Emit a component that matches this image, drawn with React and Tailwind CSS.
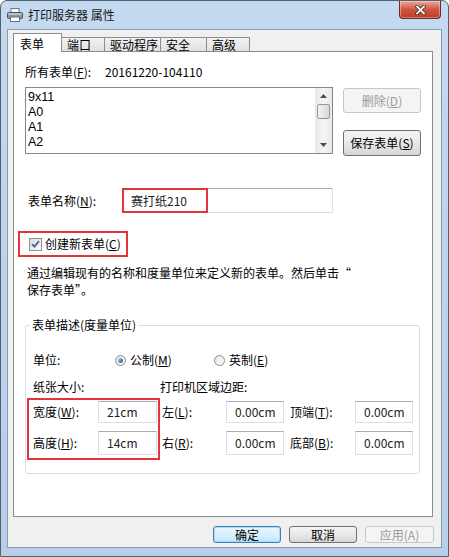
import React from 'react'

const font = { fontFamily: '"Noto Sans CJK SC", "Noto Sans", sans-serif' }

const PrinterIcon = () => (
  <svg width="16" height="14" viewBox="0 0 16 14" className="shrink-0">
    <rect x="4" y="0.5" width="8" height="4" fill="#fff" stroke="#6b7480" />
    <rect x="0.5" y="4.5" width="15" height="6" rx="1" fill="#8d96a2" stroke="#4d5560" />
    <rect x="1.5" y="5" width="13" height="2" fill="#b8c0ca" />
    <rect x="3.5" y="9" width="9" height="4.5" fill="#fff" stroke="#6b7480" />
    <circle cx="13" cy="7" r="0.8" fill="#6fdc6f" />
  </svg>
)

const Btn = ({ children, disabled, primary, className = '' }) => (
  <div
    className={
      'flex items-center justify-center rounded-[3px] border text-[12px] ' +
      (disabled
        ? 'border-[#c4c8cc] bg-[#f4f4f4] text-[#9a9a9a] '
        : primary
        ? 'border-[#3c7fb1] bg-gradient-to-b from-[#eaf6fd] via-[#d9f0fc] to-[#bee6fd] text-black shadow-[inset_0_0_0_1px_#a9dcf7] '
        : 'border-[#707070] bg-gradient-to-b from-[#f4f4f4] via-[#e9e9e9] to-[#d6d6d6] text-black ') +
      className
    }
  >
    {children}
  </div>
)

const Field = ({ value, className = '' }) => (
  <div
    className={
      'flex items-center border border-[#dbdfe6] border-t-[#abadb3] bg-white pl-[8px] text-[12px] text-[#222] ' +
      className
    }
  >
    {value}
  </div>
)

const U = ({ children }) => <span className="underline">{children}</span>

const Radio = ({ checked }) => (
  <span className="flex h-[11px] w-[11px] items-center justify-center rounded-full border border-[#8e8f8f] bg-gradient-to-br from-[#e4e4e4] to-[#fdfdfd]">
    {checked && <span className="h-[5px] w-[5px] rounded-full bg-gradient-to-br from-[#9fd2f2] to-[#1b5f9e]" />}
  </span>
)

export default function App() {
  const tabs = ['端口', '驱动程序', '安全', '高级']
  const tabW = ['w-[43px]', 'w-[56px]', 'w-[46px]', 'w-[43px]']
  const sizes = ['9x11', 'A0', 'A1', 'A2']

  return (
    <div
      style={font}
      className="flex h-[557px] w-[449px] flex-col overflow-hidden rounded-t-[7px] border border-[#56606c] bg-gradient-to-b from-[#c4daf1] via-[#bcd3ec] to-[#b7cfe9] text-black"
    >
      {/* title bar */}
      <div className="flex h-[28px] items-start justify-between">
        <div className="flex h-[28px] items-center gap-[5px] pl-[6px] text-[12px] text-[#1a1a1a]">
          <PrinterIcon />
          <span>打印服务器 属性</span>
        </div>
        <div className="mr-[7px] flex h-[18px] w-[42px] items-center justify-center rounded-b-[4px] border border-t-0 border-[#6b2a22] bg-gradient-to-b from-[#e9a99b] via-[#d0553f] to-[#c23a22] shadow-[inset_0_0_0_1px_rgba(255,255,255,0.35)]">
          <svg width="11" height="10" viewBox="0 0 11 10">
            <path d="M2 1.5 L9 8.5 M9 1.5 L2 8.5" stroke="#3a1a14" strokeWidth="3.2" strokeLinecap="square" />
            <path d="M2 1.5 L9 8.5 M9 1.5 L2 8.5" stroke="#fff" strokeWidth="1.8" strokeLinecap="square" />
          </svg>
        </div>
      </div>

      {/* client area */}
      <div className="mx-[6px] mb-[8px] flex flex-1 flex-col border border-[#8a9bb0] bg-[#f0f0f0] pl-[5px] pt-[3px]">
        {/* tabs */}
        <div className="relative z-10 -mb-px flex h-[19px] items-end text-[12px]">
          <div className="flex h-[19px] w-[49px] items-start border border-b-0 border-[#898c95] bg-white pl-[6px] pt-[1px]">
            表单
          </div>
          {tabs.map((t, i) => (
            <div
              key={t}
              className={
                'flex h-[15px] items-center border border-l-0 border-[#898c95] bg-gradient-to-b from-[#f2f2f2] to-[#e1e1e1] pl-[5px] leading-none ' +
                tabW[i]
              }
            >
              {t}
            </div>
          ))}
        </div>

        {/* tab page */}
        <div className="h-[466px] w-[420px] border border-[#898c95] bg-white text-[12px] leading-[14px]">
          <div className="mt-[13px] flex pl-[11px]">
            <span className="w-[80px]">
              所有表单(<U>F</U>):
            </span>
            <span>20161220-104110</span>
          </div>

          {/* list + buttons */}
          <div className="mt-[8px] flex pl-[11px]">
            <div className="flex h-[67px] w-[308px] border border-[#828790] bg-white">
              <div className="flex-1 pl-[2px] pt-[2px] font-['Liberation_Sans',sans-serif] text-[12.5px]">
                {sizes.map((s) => (
                  <div key={s} className="h-[15px] leading-[15px]">
                    {s}
                  </div>
                ))}
              </div>
              <div className="flex w-[17px] flex-col items-center bg-gradient-to-r from-[#e8e8e8] via-[#f5f5f5] to-[#e8e8e8]">
                <svg width="7" height="4" viewBox="0 0 7 4" className="mt-[6px]">
                  <path d="M0 4 L3.5 0 L7 4 Z" fill="#4d4d4d" />
                </svg>
                <div className="mt-[6px] h-[15px] w-[13px] rounded-[2px] border border-[#979797] bg-gradient-to-r from-[#f3f3f3] to-[#d8d8d8]" />
                <div className="flex-1" />
                <svg width="7" height="4" viewBox="0 0 7 4" className="mb-[6px]">
                  <path d="M0 0 L3.5 4 L7 0 Z" fill="#4d4d4d" />
                </svg>
              </div>
            </div>
            <div className="ml-[10px] flex w-[78px] flex-col">
              <Btn disabled className="mt-px h-[25px]">
                删除(<U>D</U>)
              </Btn>
              <Btn className="mt-[17px] h-[26px]">
                保存表单(<U>S</U>)
              </Btn>
            </div>
          </div>

          {/* form name */}
          <div className="mt-[32px] flex items-center pl-[14px]">
            <span className="w-[94px]">
              表单名称(<U>N</U>):
            </span>
            <div className="relative">
              <Field value="赛打纸210" className="h-[25px] w-[211px] pl-[5px]" />
              <div className="absolute left-0 top-0 h-[25px] w-[86px] border-2 border-[#e2343a]" />
            </div>
          </div>

          {/* checkbox */}
          <div className="ml-[4px] mt-[18px] flex h-[26px] w-[110px] items-center border-2 border-[#e2343a] pl-[9px]">
            <span className="flex h-[13px] w-[13px] items-center justify-center border border-[#8e8f8f] bg-gradient-to-br from-[#dcdcdc] to-[#fbfbfb]">
              <svg width="9" height="8" viewBox="0 0 9 8">
                <path d="M1 4.2 L3.4 6.6 L8 1.2" stroke="#4a5f97" strokeWidth="1.8" fill="none" />
              </svg>
            </span>
            <span className="ml-[3px]">
              创建新表单(<U>C</U>)
            </span>
          </div>

          <p className="mt-[7px] pl-[13px] leading-[17px]">
            通过编辑现有的名称和度量单位来定义新的表单。然后单击“
            <br />
            保存表单”。
          </p>

          {/* group box */}
          <fieldset className="ml-[11px] mt-[20px] h-[156px] w-[395px] rounded-[3px] border border-[#d5dfe5]">
            <legend className="ml-[4px] px-[2px] leading-[14px]">表单描述(度量单位)</legend>

            <div className="mt-[21px] flex items-center pl-[7px]">
              <span className="w-[82px]">单位:</span>
              <Radio checked />
              <span className="ml-[4px] w-[84px]">
                公制(<U>M</U>)
              </span>
              <Radio />
              <span className="ml-[4px]">
                英制(<U>E</U>)
              </span>
            </div>

            <div className="mt-[13px] flex pl-[7px]">
              <span className="w-[127px]">纸张大小:</span>
              <span>打印机区域边距:</span>
            </div>

            <div className="mt-[4px] flex pl-px">
              <div className="flex h-[62px] w-[133px] flex-col border-2 border-[#e2343a] pl-[4px] pt-px">
                <div className="flex items-center">
                  <span className="w-[65px]">
                    宽度(<U>W</U>):
                  </span>
                  <Field value="21cm" className="h-[22px] w-[59px] pl-[5px]" />
                </div>
                <div className="mt-[8px] flex items-center">
                  <span className="w-[65px]">
                    高度(<U>H</U>):
                  </span>
                  <Field value="14cm" className="h-[24px] w-[59px] pl-[5px]" />
                </div>
              </div>

              <div className="ml-[2px] flex flex-col pt-[3px]">
                <div className="flex items-center">
                  <span className="w-[64px]">
                    左(<U>L</U>):
                  </span>
                  <Field value="0.00cm" className="h-[22px] w-[58px] pl-[4px]" />
                  <span className="ml-[6px] w-[65px]">
                    顶端(<U>T</U>):
                  </span>
                  <Field value="0.00cm" className="h-[22px] w-[58px] pl-[4px]" />
                </div>
                <div className="mt-[8px] flex items-center">
                  <span className="w-[64px]">
                    右(<U>R</U>):
                  </span>
                  <Field value="0.00cm" className="h-[24px] w-[58px] pl-[4px]" />
                  <span className="ml-[6px] w-[65px]">
                    底部(<U>B</U>):
                  </span>
                  <Field value="0.00cm" className="h-[24px] w-[58px] pl-[4px]" />
                </div>
              </div>
            </div>
          </fieldset>
        </div>

        {/* dialog buttons */}
        <div className="mt-[9px] flex justify-end gap-[8px] pr-[7px] text-[12px]">
          <Btn primary className="h-[17px] w-[68px]">
            确定
          </Btn>
          <Btn className="h-[17px] w-[68px]">取消</Btn>
          <Btn disabled className="h-[17px] w-[69px]">
            应用(A)
          </Btn>
        </div>
      </div>
    </div>
  )
}
